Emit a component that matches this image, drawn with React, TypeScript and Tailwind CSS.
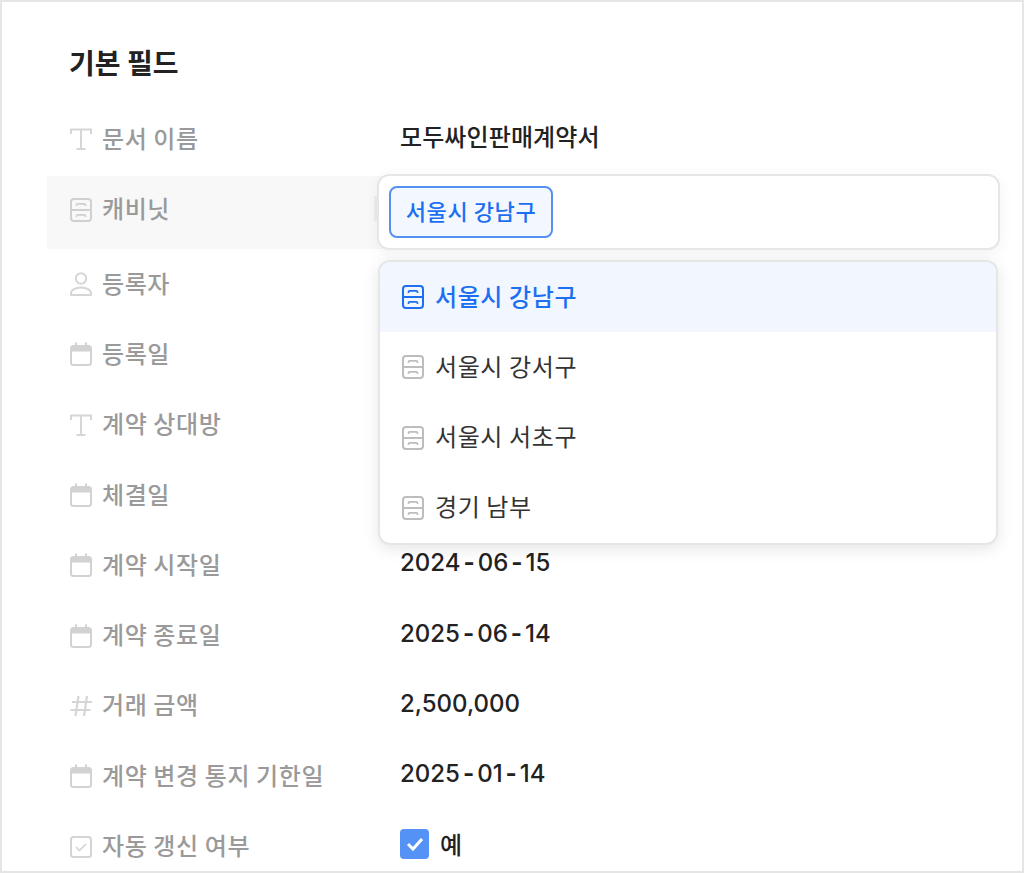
import type { ReactNode } from "react";

const font = { fontFamily: '"Noto Sans CJK KR", "Noto Sans", sans-serif' };

function TextIcon() {
  return (
    <svg width="24" height="24" viewBox="0 0 24 24" fill="none" stroke="#d6d6d6" strokeWidth="2">
      <path d="M2 7V2.5h20V7M12 2.5V22M7.5 22h9" />
    </svg>
  );
}

function CabinetIcon({ color = "#d0d0d0" }: { color?: string }) {
  return (
    <svg width="24" height="24" viewBox="0 0 24 24" fill="none" stroke={color} strokeWidth="2">
      <rect x="2" y="1" width="20" height="22" rx="3" />
      <path d="M2 12h20" />
      <path d="M7.5 8V7a1.2 1.2 0 0 1 1.2-1.2h6.6A1.2 1.2 0 0 1 16.5 7v1M7.5 19v-1a1.2 1.2 0 0 1 1.2-1.2h6.6a1.2 1.2 0 0 1 1.2 1.2v1" strokeWidth="1.7" />
    </svg>
  );
}

function PersonIcon() {
  return (
    <svg width="24" height="24" viewBox="0 0 24 24" fill="none" stroke="#d6d6d6" strokeWidth="2">
      <circle cx="12" cy="6.5" r="5.2" />
      <path d="M2 23v-1.5c0-3.6 4.6-6 10-6s10 2.4 10 6V23z" />
    </svg>
  );
}

function CalendarIcon() {
  return (
    <svg width="24" height="24" viewBox="0 0 24 24" fill="none">
      <rect x="2" y="4" width="20" height="19" rx="2.5" stroke="#d2d2d2" strokeWidth="2" />
      <path d="M2 6a2.5 2.5 0 0 1 2.5-2.5h15A2.5 2.5 0 0 1 22 6v3.5H2z" fill="#d2d2d2" />
      <path d="M7 0.5v4M17 0.5v4" stroke="#d2d2d2" strokeWidth="2" />
    </svg>
  );
}

function HashIcon() {
  return (
    <svg width="24" height="24" viewBox="0 0 24 24" fill="none" stroke="#d6d6d6" strokeWidth="2.2">
      <path d="M9.5 2 6.5 22M18 2l-3 20M3 8h20M1.5 16h20" />
    </svg>
  );
}

function CheckIcon() {
  return (
    <svg width="24" height="24" viewBox="0 0 24 24" fill="none" stroke="#d4d4d4" strokeWidth="2">
      <rect x="2" y="2" width="20" height="20" rx="2.5" />
      <path d="m7 12 3.5 3.5L17 9" strokeWidth="1.6" />
    </svg>
  );
}

function Row({
  icon,
  label,
  value,
  className = "h-[70.3px]",
}: {
  icon: ReactNode;
  label: string;
  value?: ReactNode;
  className?: string;
}) {
  return (
    <div className={`flex items-center pl-[22px] ${className}`}>
      <div className="flex w-[331px] shrink-0 items-center gap-[9px]">
        {icon}
        <span className="pb-[3px] text-[24px] font-medium leading-none tracking-[0.6px] text-[#9a9a9a]">{label}</span>
      </div>
      <div className="pb-[6px] text-[24px] font-medium leading-none text-[#222222]">{value}</div>
    </div>
  );
}

// dates have a wider dash than Inter's, so the hyphens get some margin
function Num({ text }: { text: string }) {
  const parts = text.split("-");
  return (
    <span className="font-['Inter'] font-medium">
      {parts.map((p, i) => (
        <span key={i}>
          {i > 0 && <span className="mx-[3px] font-bold">-</span>}
          {p}
        </span>
      ))}
    </span>
  );
}

const options = ["서울시 강남구", "서울시 강서구", "서울시 서초구", "경기 남부"];

export default function App() {
  return (
    <div style={font} className="h-[873px] w-[1024px] overflow-hidden bg-white">
      <div className="h-full border-2 border-[#e5e5e5] pl-[45px] pt-[40px]">
        <h2 className="pl-[22px] text-[28px] font-bold leading-[40px] text-[#222222]">기본 필드</h2>
        <div className="mt-[20px]">
          <Row icon={<TextIcon />} label="문서 이름" value={<span className="tracking-[0.1px]">모두싸인판매계약서</span>} className="h-[74px]" />
          <div className="relative">
            <Row icon={<CabinetIcon />} label="캐비닛" className="h-[73px] w-[340px] bg-[#f8f8f8] pb-[6px]" />
            <div className="absolute left-[327px] top-[20px] h-[25px] w-[3px] bg-[#ececec]" />
            <div className="absolute left-[330px] top-[-2px] flex h-[76px] w-[623px] items-center rounded-[12px] border-2 border-[#e6e6e6] bg-white pb-[1px] pl-[10px] shadow-[0_4px_16px_rgba(0,0,0,0.05)]">
              <span className="flex h-[52px] w-[164px] items-center justify-center rounded-[8px] border-2 border-[#5590f0] bg-[#f3f8ff] pb-[2px] text-[22px] font-medium tracking-[0.6px] text-[#1d6ff2]">
                서울시 강남구
              </span>
            </div>
            <div className="absolute left-[331px] top-[84px] z-10 w-[620px] overflow-hidden rounded-[12px] border-2 border-[#e6e6e6] bg-white shadow-[0_4px_16px_rgba(0,0,0,0.1)]">
              {options.map((o, i) => (
                <div
                  key={o}
                  className={`flex h-[70.25px] items-center gap-[10px] pl-[21px] text-[24px] tracking-[0.6px] ${
                    i === 0 ? "bg-[#f2f7ff] font-medium text-[#1d6ff2]" : "text-[#333333]"
                  }`}
                >
                  <CabinetIcon color={i === 0 ? "#1d6ff2" : "#bdbdbd"} />
                  <span className="pb-[3px]">{o}</span>
                </div>
              ))}
            </div>
          </div>
          <Row icon={<PersonIcon />} label="등록자" />
          <Row icon={<CalendarIcon />} label="등록일" />
          <Row icon={<TextIcon />} label="계약 상대방" />
          <Row icon={<CalendarIcon />} label="체결일" />
          <Row icon={<CalendarIcon />} label="계약 시작일" value={<Num text="2024-06-15" />} />
          <Row icon={<CalendarIcon />} label="계약 종료일" value={<Num text="2025-06-14" />} />
          <Row icon={<HashIcon />} label="거래 금액" value={<Num text="2,500,000" />} />
          <Row icon={<CalendarIcon />} label="계약 변경 통지 기한일" value={<Num text="2025-01-14" />} />
          <Row
            icon={<CheckIcon />}
            label="자동 갱신 여부"
            value={
              <span className="flex items-center gap-[11px]">
                <span className="flex h-[30px] w-[29px] items-center justify-center rounded-[4px] bg-[#5592f5]">
                  <svg width="20" height="20" viewBox="0 0 20 20" fill="none" stroke="white" strokeWidth="3">
                    <path d="m3 10 5 5 9-10" />
                  </svg>
                </span>
                예
              </span>
            }
          />
        </div>
      </div>
    </div>
  );
}
